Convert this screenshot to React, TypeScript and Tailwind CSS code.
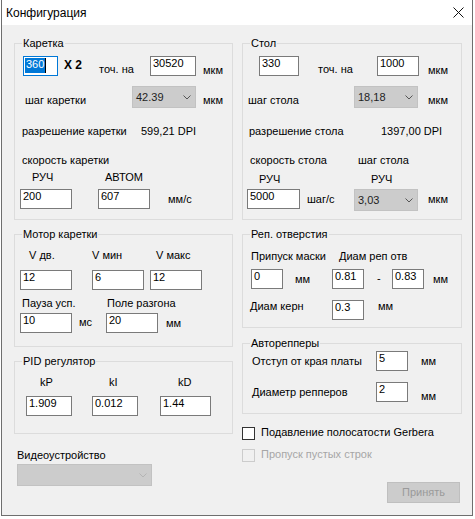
import React from "react";

type P = { className?: string; children?: React.ReactNode };

const Lbl = ({ className = "", children }: P) => (
  <div className={`shrink-0 whitespace-nowrap h-[13px] leading-[13px] ${className}`}>{children}</div>
);

const TB = ({ className = "", children }: P) => (
  <div className={`shrink-0 h-[20px] border border-[#7a7a7a] bg-white pl-[2px] leading-[13px] whitespace-nowrap ${className}`}>
    {children}
  </div>
);

const Chevron = ({ color }: { color: string }) => (
  <svg width="8" height="5" viewBox="0 0 8 5" className="shrink-0">
    <path d="M0.5 0.5 L4 4 L7.5 0.5" stroke={color} strokeWidth="1" fill="none" />
  </svg>
);

const CB = ({ className = "", children, disabled = false }: P & { disabled?: boolean }) => (
  <div
    className={`shrink-0 h-[22px] border border-[#c2c2c2] bg-[#cccccc] flex items-center justify-between pl-[3px] pr-[4px] ${className}`}
  >
    <span className="leading-[13px] text-[#1e1e1e]">{children}</span>
    <Chevron color={disabled ? "#b4b4b4" : "#555555"} />
  </div>
);

const Group = ({ title, className = "", children }: P & { title: string }) => (
  <div className={`relative shrink-0 border border-[#dcdcdc] ${className}`}>
    <div className="absolute left-[7px] -top-[7px] bg-[#f0f0f0] px-[1px] leading-[13px] whitespace-nowrap">{title}</div>
    {children}
  </div>
);

export default function App() {
  return (
    <div className="w-[475px] h-[519px] bg-white overflow-hidden font-['Liberation_Sans',Arial,sans-serif] text-[11px] leading-[13px] text-black">
      <div className="ml-[1px] w-[472px] h-[516px] border-x border-b border-[#6e6e6e] bg-[#f0f0f0] flex flex-col">
        {/* title bar */}
        <div className="h-[25px] shrink-0 bg-white flex items-center justify-between pl-[4px] pr-[8px]">
          <span className="text-[12px] leading-[14px] text-black">Конфигурация</span>
          <svg width="11" height="11" viewBox="0 0 11 11">
            <path d="M0.5 0.5 L10.5 10.5 M10.5 0.5 L0.5 10.5" stroke="#111" strokeWidth="1" fill="none" />
          </svg>
        </div>

        <div className="flex pl-[12px] pt-[18px]">
          {/* LEFT COLUMN */}
          <div className="w-[219px] shrink-0 flex flex-col">
            <Group title="Каретка" className="w-[219px] h-[177px]">
              <div className="flex items-start mt-[12px]">
                <div className="shrink-0 ml-[8px] w-[35px] h-[20px] border border-[#0078d7] bg-white pl-[1px] pt-[1px] flex items-start">
                  <span className="block bg-[#0078d7] text-white h-[15px] leading-[13px] px-[1px]">360</span>
                  <span className="block w-[1px] h-[15px] bg-black" />
                </div>
                <div className="shrink-0 ml-[6px] mt-[2px] w-[19px] font-bold text-[12px] leading-[14px] whitespace-nowrap">X 2</div>
                <Lbl className="ml-[16px] mt-[7px] w-[33px]">точ. на</Lbl>
                <TB className="ml-[18px] w-[46px]">30520</TB>
                <Lbl className="ml-[7px] mt-[8px] w-[23px]">мкм</Lbl>
              </div>
              <div className="flex items-start mt-[9px]">
                <Lbl className="ml-[10px] mt-[8px] w-[63px]">шаг каретки</Lbl>
                <CB className="ml-[44px] w-[64px]">42.39</CB>
                <Lbl className="ml-[7px] mt-[8px] w-[23px]">мкм</Lbl>
              </div>
              <div className="flex items-start mt-[17px]">
                <Lbl className="ml-[7px] w-[106px]">разрешение каретки</Lbl>
                <Lbl className="ml-[13px] w-[52px]">599,21 DPI</Lbl>
              </div>
              <div className="flex items-start mt-[16px]">
                <Lbl className="ml-[7px] w-[92px]">скорость каретки</Lbl>
              </div>
              <div className="flex items-start mt-[4px]">
                <Lbl className="ml-[17px] w-[22px]">РУЧ</Lbl>
                <Lbl className="ml-[51px] w-[37px]">АВТОМ</Lbl>
              </div>
              <div className="flex items-start mt-[5px]">
                <TB className="ml-[5px] w-[52px]">200</TB>
                <TB className="ml-[26px] w-[52px]">607</TB>
                <Lbl className="ml-[18px] mt-[4px] w-[29px]">мм/с</Lbl>
              </div>
            </Group>

            <Group title="Мотор каретки" className="mt-[14px] w-[219px] h-[113px]">
              <div className="flex items-start mt-[14px]">
                <Lbl className="ml-[14px] w-[25px]">V дв.</Lbl>
                <Lbl className="ml-[38px] w-[32px]">V мин</Lbl>
                <Lbl className="ml-[32px] w-[35px]">V макс</Lbl>
              </div>
              <div className="flex items-start mt-[8px]">
                <TB className="ml-[5px] w-[52px]">12</TB>
                <TB className="ml-[20px] w-[52px]">6</TB>
                <TB className="ml-[6px] w-[52px]">12</TB>
              </div>
              <div className="flex items-start mt-[7px]">
                <Lbl className="ml-[7px] w-[52px]">Пауза усп.</Lbl>
                <Lbl className="ml-[33px] w-[68px]">Поле разгона</Lbl>
              </div>
              <div className="flex items-start mt-[3px]">
                <TB className="ml-[5px] w-[52px]">10</TB>
                <Lbl className="ml-[7px] mt-[3px] w-[14px]">мс</Lbl>
                <TB className="ml-[13px] w-[52px]">20</TB>
                <Lbl className="ml-[8px] mt-[4px] w-[17px]">мм</Lbl>
              </div>
            </Group>

            <Group title="PID регулятор" className="mt-[14px] w-[219px] h-[73px]">
              <div className="flex items-start mt-[14px]">
                <Lbl className="ml-[25px] w-[13px]">kP</Lbl>
                <Lbl className="ml-[56px] w-[8px]">kI</Lbl>
                <Lbl className="ml-[61px] w-[15px]">kD</Lbl>
              </div>
              <div className="flex items-start mt-[7px]">
                <TB className="ml-[11px] w-[46px]">1.909</TB>
                <TB className="ml-[20px] w-[46px]">0.012</TB>
                <TB className="ml-[22px] w-[51px]">1.44</TB>
              </div>
            </Group>

            <Lbl className="mt-[15px] ml-[3px] w-[90px]">Видеоустройство</Lbl>
            <CB className="mt-[2px] ml-[3px] w-[135px]" disabled>
              {""}
            </CB>
          </div>

          {/* RIGHT COLUMN */}
          <div className="ml-[9px] w-[220px] shrink-0 flex flex-col">
            <Group title="Стол" className="w-[220px] h-[177px]">
              <div className="flex items-start mt-[12px]">
                <TB className="ml-[16px] w-[40px]">330</TB>
                <Lbl className="ml-[19px] mt-[7px] w-[34px]">точ. на</Lbl>
                <TB className="ml-[25px] w-[42px]">1000</TB>
                <Lbl className="ml-[9px] mt-[8px] w-[22px]">мкм</Lbl>
              </div>
              <div className="flex items-start mt-[9px]">
                <Lbl className="ml-[5px] mt-[8px] w-[52px]">шаг стола</Lbl>
                <CB className="ml-[54px] w-[64px]">18,18</CB>
                <Lbl className="ml-[10px] mt-[8px] w-[22px]">мкм</Lbl>
              </div>
              <div className="flex items-start mt-[17px]">
                <Lbl className="ml-[6px] w-[94px]">разрешение стола</Lbl>
                <Lbl className="ml-[38px] w-[58px]">1397,00 DPI</Lbl>
              </div>
              <div className="flex items-start mt-[16px]">
                <Lbl className="ml-[7px] w-[79px]">скорость стола</Lbl>
                <Lbl className="ml-[29px] w-[52px]">шаг стола</Lbl>
              </div>
              <div className="flex items-start mt-[6px]">
                <Lbl className="ml-[16px] w-[23px]">РУЧ</Lbl>
                <Lbl className="ml-[89px] w-[22px]">РУЧ</Lbl>
              </div>
              <div className="flex items-start mt-[3px]">
                <TB className="ml-[4px] w-[53px]">5000</TB>
                <Lbl className="ml-[7px] mt-[4px] w-[31px]">шаг/с</Lbl>
                <CB className="ml-[16px] w-[64px]">3,03</CB>
                <Lbl className="ml-[10px] mt-[4px] w-[22px]">мкм</Lbl>
              </div>
            </Group>

            <Group title="Реп. отверстия" className="mt-[14px] w-[220px] h-[94px]">
              <div className="flex items-start mt-[15px]">
                <Lbl className="ml-[8px] w-[78px]">Припуск маски</Lbl>
                <Lbl className="ml-[10px] w-[69px]">Диам реп отв</Lbl>
              </div>
              <div className="flex items-start mt-[6px]">
                <TB className="ml-[8px] w-[32px]">0</TB>
                <Lbl className="ml-[12px] mt-[4px] w-[16px]">мм</Lbl>
                <TB className="ml-[21px] w-[32px]">0.81</TB>
                <Lbl className="ml-[13px] mt-[3px] w-[5px]">-</Lbl>
                <TB className="ml-[10px] w-[32px]">0.83</TB>
                <Lbl className="ml-[9px] mt-[4px] w-[17px]">мм</Lbl>
              </div>
              <div className="flex items-start mt-[11px]">
                <Lbl className="ml-[7px] w-[55px]">Диам керн</Lbl>
                <TB className="ml-[27px] w-[32px]">0.3</TB>
                <Lbl className="ml-[14px] w-[17px]">мм</Lbl>
              </div>
            </Group>

            <Group title="Авторепперы" className="mt-[15px] w-[220px] h-[71px]">
              <div className="flex items-start mt-[7px]">
                <Lbl className="ml-[9px] mt-[4px] w-[110px]">Отступ от края платы</Lbl>
                <TB className="ml-[14px] w-[32px]">5</TB>
                <Lbl className="ml-[13px] mt-[4px] w-[15px]">мм</Lbl>
              </div>
              <div className="flex items-start mt-[11px]">
                <Lbl className="ml-[9px] mt-[4px] w-[96px]">Диаметр репперов</Lbl>
                <TB className="ml-[28px] w-[32px]">2</TB>
                <Lbl className="ml-[13px] mt-[8px] w-[15px]">мм</Lbl>
              </div>
            </Group>

            <div className="flex items-start mt-[12px]">
              <div className="shrink-0 mt-[1px] w-[13px] h-[13px] border border-[#333333] bg-white" />
              <Lbl className="ml-[6px]">Подавление полосатости Gerbera</Lbl>
            </div>
            <div className="flex items-start mt-[8px]">
              <div className="shrink-0 mt-[1px] w-[13px] h-[13px] border border-[#cccccc] bg-[#f0f0f0]" />
              <Lbl className="ml-[6px] text-[#a6a6a6]">Пропуск пустых строк</Lbl>
            </div>

            <div className="mt-[20px] ml-[145px] w-[73px] h-[21px] border border-[#bfbfbf] bg-[#cccccc] flex items-center justify-center text-[#9a9a9a] leading-[13px]">
              Принять
            </div>
          </div>
        </div>
      </div>
    </div>
  );
}
